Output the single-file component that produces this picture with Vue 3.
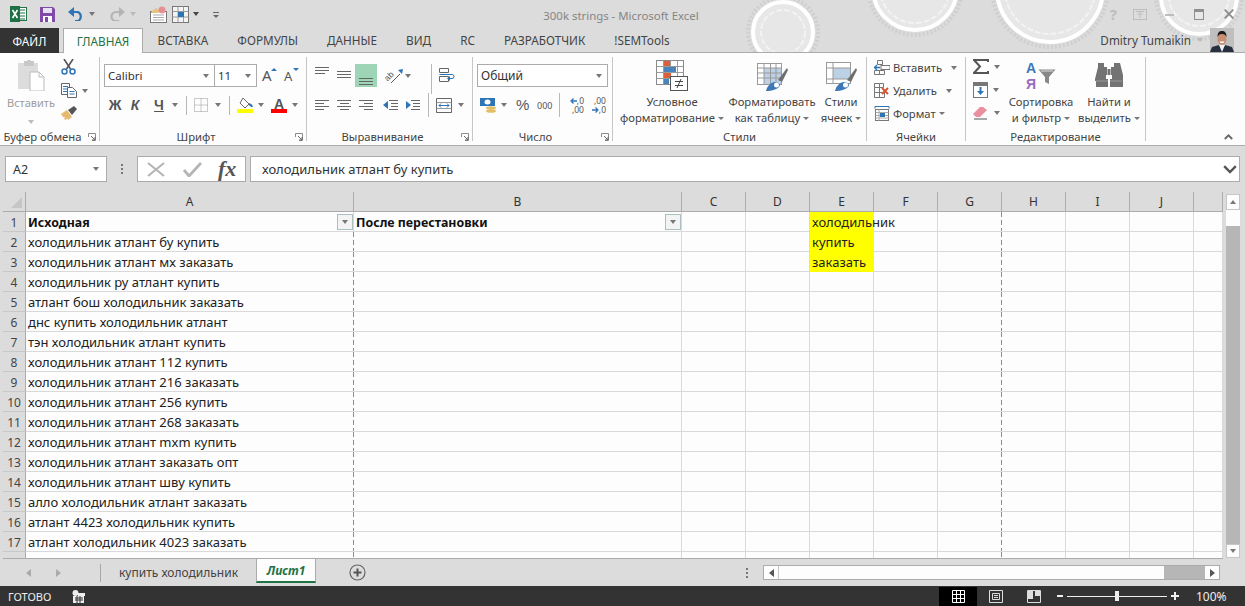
<script setup>
const rows = [
  'холодильник атлант бу купить',
  'холодильник атлант мх заказать',
  'холодильник ру атлант купить',
  'атлант бош холодильник заказать',
  'днс купить холодильник атлант',
  'тэн холодильник атлант купить',
  'холодильник атлант 112 купить',
  'холодильник атлант 216 заказать',
  'холодильник атлант 256 купить',
  'холодильник атлант 268 заказать',
  'холодильник атлант mxm купить',
  'холодильник атлант заказать опт',
  'холодильник атлант шву купить',
  'алло холодильник атлант заказать',
  'атлант 4423 холодильник купить',
  'атлант холодильник 4023 заказать',
  '',
  ''
]
const cols = ['A', 'B', 'C', 'D', 'E', 'F', 'G', 'H', 'I', 'J', '']
const tabs = ['ВСТАВКА', 'ФОРМУЛЫ', 'ДАННЫЕ', 'ВИД', 'RC', 'РАЗРАБОТЧИК', '!SEMTools']
const eCol = { 1: 'холодильник', 2: 'купить', 3: 'заказать' }
</script>

<template>
  <div class="app">
    <svg class="rings" width="1245" height="52" viewBox="0 0 1245 52">
      <g fill="#e7e7e7" stroke="#fff" stroke-width="4">
        <g>
          <circle cx="783" cy="32" r="35" fill="none" stroke="#cfcfcf" stroke-width="4" stroke-dasharray="2 2"/>
          <circle cx="783" cy="32" r="30"/>
          <circle cx="783" cy="32" r="22" fill="none" stroke="#f3f3f3" stroke-width="2" stroke-dasharray="6 2"/>
        </g>
        <g>
          <circle cx="915" cy="-12" r="47" fill="none" stroke="#cfcfcf" stroke-width="4" stroke-dasharray="2 2"/>
          <circle cx="915" cy="-12" r="42"/>
          <circle cx="915" cy="-12" r="35" fill="none" stroke="#f3f3f3" stroke-width="2" stroke-dasharray="6 2"/>
        </g>
        <g>
          <circle cx="1050" cy="-11" r="58" fill="none" stroke="#cfcfcf" stroke-width="4" stroke-dasharray="2 2"/>
          <circle cx="1050" cy="-11" r="53"/>
          <circle cx="1050" cy="-11" r="45" fill="none" stroke="#f3f3f3" stroke-width="2" stroke-dasharray="6 2"/>
        </g>
        <g>
          <circle cx="1199" cy="-4" r="43" fill="none" stroke="#cfcfcf" stroke-width="4" stroke-dasharray="2 2"/>
          <circle cx="1199" cy="-4" r="38"/>
          <circle cx="1199" cy="-4" r="30" fill="none" stroke="#f3f3f3" stroke-width="2" stroke-dasharray="6 2"/>
        </g>
      </g>
    </svg>

    <header class="titlebar">
      <div class="qat">
        <svg class="ml10" width="17" height="16" viewBox="0 0 17 16"><rect x="6.500" y="1.500" width="10" height="13" fill="#fff" stroke="#217346"/><path d="M10 4h5M10 7h5M10 10h5M10 13h5" stroke="#217346"/><rect x="0" y="0" width="10" height="16" fill="#1e7145"/><path d="M2.500 4l5 8M7.500 4l-5 8" stroke="#fff" stroke-width="1.600"/></svg>
        <svg class="ml13" width="15" height="15" viewBox="0 0 15 15"><path d="M0 0h13l2 2v13H0z" fill="#7f4aa8"/><rect x="3" y="1" width="9" height="5" fill="#e9e0f0"/><rect x="3" y="9" width="9" height="6" fill="#fff"/><rect x="5" y="10" width="3" height="5" fill="#7f4aa8"/></svg>
        <svg class="ml13" width="17" height="14" viewBox="0 0 17 14"><path d="M2 5h8a5 5 0 0 1 0 9H7" fill="none" stroke="#2f75b5" stroke-width="2.200"/><path d="M6 0v10L0 5z" fill="#2f75b5"/></svg>
        <i class="caret ml4"></i>
        <svg class="ml15" width="15" height="14" viewBox="0 0 15 14"><path d="M13 5H6a4.500 4.500 0 0 0 0 9h3" fill="none" stroke="#b4b4b4" stroke-width="2.200"/><path d="M9 0v10l6-5z" fill="#b4b4b4"/></svg>
        <i class="caret pale ml5"></i>
        <svg class="ml14" width="17" height="17" viewBox="0 0 17 17"><rect x=".5" y="5.500" width="16" height="11" fill="#fff" stroke="#777"/><path d="M3 9h11M3 11.500h11M3 14h11" stroke="#aaa"/><path d="M1 6l5-4 4 3-2 2H1z" fill="#e7c27d"/><circle cx="12" cy="4" r="3.500" fill="#e58f97"/></svg>
        <svg class="ml5" width="17" height="17" viewBox="0 0 17 17"><rect x=".5" y=".5" width="16" height="16" fill="#f4f4f4" stroke="#777"/><path d="M.5 5.500h16M.5 11h16M6 .5v16M11.500.5v16" stroke="#9a9a9a"/><rect x="6" y="6" width="6" height="5" fill="#2f75b5"/></svg>
        <i class="caret dark ml4"></i>
        <div class="qatmore ml14"><b></b><i class="caret tiny"></i></div>
      </div>
      <div class="title">300k strings - Microsoft Excel</div>
      <div class="winbtns">
        <span class="help">?</span>
        <svg class="ml16" width="14" height="11" viewBox="0 0 14 11"><rect x=".5" y=".5" width="13" height="10" fill="none" stroke="#bdbdbd"/><path d="M7 9V4M4.500 6L7 3.500 9.500 6M3 2.500h8" stroke="#bdbdbd" fill="none"/></svg>
        <svg class="ml18" width="9" height="3" viewBox="0 0 9 3"><rect width="9" height="2" y="1" fill="#bdbdbd"/></svg>
        <svg class="ml20" width="10" height="11" viewBox="0 0 10 11"><rect x=".5" y=".5" width="9" height="10" fill="none" stroke="#8f8f8f"/><rect width="10" height="2" y="1" fill="#8f8f8f"/></svg>
        <svg class="ml20" width="10" height="10" viewBox="0 0 10 10"><path d="M.7.7l8.600 8.600M9.300.7L.7 9.300" stroke="#8a8a8a" stroke-width="1.800"/></svg>
      </div>
    </header>

    <nav class="tabs">
      <div class="file">ФАЙЛ</div>
      <div class="tab active">ГЛАВНАЯ</div>
      <div v-for="t in tabs" :key="t" class="tab">{{ t }}</div>
      <div class="user">
        <span>Dmitry Tumaikin</span>
        <i class="caret pale ml6"></i>
        <svg class="avatar" width="24" height="24" viewBox="0 0 24 24"><rect width="24" height="24" fill="#bfbfbf"/><path d="M0 24l2-5 7-2 3 3 3-3 7 2 2 5z" fill="#26303e"/><path d="M9 17l3 7 3-7z" fill="#f2f2f2"/><ellipse cx="12" cy="11" rx="4.500" ry="6" fill="#c88f72"/><path d="M7.500 9c0-5 2-6 4.500-6s4.500 1 4.500 6c-1-2-2-3-4.500-3S8.500 7 7.500 9z" fill="#1d1a1a"/><path d="M9.500 13.500h5l-1 1.500h-3z" fill="#fff"/></svg>
      </div>
    </nav>

    <section class="ribbon">
      <div class="grp g1">
        <div class="body clip">
          <div class="pastecol">
            <svg width="28" height="31" viewBox="0 0 28 31"><path d="M1 3h20v26H1z" fill="#dcdcdc"/><path d="M7 3V1h3l1-1h2l1 1h3v5H7z" fill="#c8c8c8"/><path d="M13 12h9l5 5v14H13z" fill="#fff" stroke="#bcbcbc"/><path d="M22 12v5h5" fill="none" stroke="#bcbcbc"/></svg>
            <span class="pastetxt">Вставить</span>
            <i class="caret pale mt9"></i>
          </div>
          <div class="smallcol">
            <svg width="15" height="16" viewBox="0 0 15 16"><path d="M3 0l6.500 10M12 0L5.500 10" stroke="#555" stroke-width="1.600"/><circle cx="3.500" cy="12.500" r="2.500" fill="none" stroke="#2f75b5" stroke-width="1.500"/><circle cx="11.500" cy="12.500" r="2.500" fill="none" stroke="#2f75b5" stroke-width="1.500"/></svg>
            <div class="rowc">
              <svg width="16" height="15" viewBox="0 0 16 15"><path d="M.5.5h8v11h-8z" fill="#fff" stroke="#666"/><path d="M2 3.500h5M2 6h5M2 8.500h5" stroke="#2f75b5"/><path d="M6.500 4.500h5l4 4v6h-9z" fill="#fff" stroke="#666"/><path d="M8.500 8.500h5M8.500 11h5" stroke="#2f75b5"/></svg>
              <i class="caret ml5"></i>
            </div>
            <svg width="17" height="15" viewBox="0 0 17 15"><path d="M0 8l6-4 5 7-4 3-1-2-1 2-2-1 1-2-2 0z" fill="#e7b96f"/><path d="M7 4l6-4 3 3-5 6z" fill="#555"/></svg>
          </div>
        </div>
        <div class="glabel"><i></i><span>Буфер обмена</span><i></i><svg class="launch" width="8" height="8" viewBox="0 0 8 8"><path d="M.5 4V.5H7.500V7.500H4" fill="none" stroke="#8c8c8c"/><path d="M3 3l4 4M7 4v3H4" stroke="#666" fill="none"/></svg></div>
      </div>
      <i class="gsep"></i>

      <div class="grp g2">
        <div class="body col">
          <div class="r1">
            <div class="combo font"><span>Calibri</span><i class="caret"></i></div>
            <div class="combo size"><span>11</span><i class="caret"></i></div>
            <span class="growA ml5">A<i class="tri up"></i></span>
            <span class="shrinkA ml7">A<i class="tri down"></i></span>
          </div>
          <div class="r2">
            <b class="fx w20 ml5">Ж</b>
            <b class="fx w20 it">К</b>
            <b class="fx w20 ml4 un">Ч</b>
            <i class="caret ml3"></i>
            <i class="vs ml8"></i>
            <svg class="ml7" width="14" height="14" viewBox="0 0 14 14"><path d="M.5.5h13v13H.5zM7 .5v13M.5 7h13" fill="none" stroke="#999" stroke-dasharray="1 1"/></svg>
            <i class="caret ml7"></i>
            <i class="vs ml8"></i>
            <svg class="ml7" width="16" height="15" viewBox="0 0 16 15"><path d="M6 0l6 6-4 4-5-5z" fill="#fff" stroke="#666"/><path d="M12 6c2 1 3 2 3 3" stroke="#2f75b5" stroke-width="2" fill="none"/><rect y="11" width="16" height="4" fill="#ffff00"/></svg>
            <i class="caret ml5"></i>
            <span class="fcolor ml7">A</span>
            <i class="caret ml5"></i>
          </div>
        </div>
        <div class="glabel"><i></i><span>Шрифт</span><i></i><svg class="launch" width="8" height="8" viewBox="0 0 8 8"><path d="M.5 4V.5H7.500V7.500H4" fill="none" stroke="#8c8c8c"/><path d="M3 3l4 4M7 4v3H4" stroke="#666" fill="none"/></svg></div>
      </div>
      <i class="gsep"></i>

      <div class="grp g3">
        <div class="body col">
          <div class="r1">
            <svg class="ml8" width="14" height="23" viewBox="0 0 14 23"><path d="M0 3.500h14M0 6.500h14M0 9.500h10" stroke="#666" fill="none"/></svg>
            <svg class="ml8" width="14" height="23" viewBox="0 0 14 23"><path d="M0 7.500h14M0 10.500h14M0 13.500h14" stroke="#666"/></svg>
            <span class="alignOn ml4"><svg width="14" height="23" viewBox="0 0 14 23"><path d="M0 14.500h14M0 17.500h14M0 20.500h14" stroke="#666"/></svg></span>
            <svg class="ml6 vis" width="20" height="18" viewBox="0 0 20 18"><text x="1" y="12" font-size="8.500" fill="#555" font-family="Liberation Sans" transform="rotate(-45 6 9)">ab</text><path d="M8 16L17 7" stroke="#555"/><path d="M15 3l5-1-1 5z" fill="#2f75b5"/></svg>
            <i class="caret ml2"></i>
            <i class="vs top ml20"></i>
            <svg class="ml7" width="16" height="15" viewBox="0 0 16 15"><path d="M.5.5h9v4h-9zM.5 8.500h9v5h-9z" fill="none" stroke="#666"/><path d="M.5 6.500H13a2 2 0 0 1 0 4h-2" stroke="#2f75b5" fill="none"/><path d="M11 8v5l-3-2.500z" fill="#2f75b5"/></svg>
          </div>
          <div class="r2">
            <svg class="ml8" width="14" height="11" viewBox="0 0 14 11"><path d="M0 .5h14M0 3.500h9M0 6.500h14M0 9.500h9" stroke="#666"/></svg>
            <svg class="ml8" width="14" height="11" viewBox="0 0 14 11"><path d="M0 .5h14M3 3.500h9M0 6.500h14M3 9.500h9" stroke="#666"/></svg>
            <svg class="ml8" width="14" height="11" viewBox="0 0 14 11"><path d="M0 .5h14M5 3.500h9M0 6.500h14M5 9.500h9" stroke="#666"/></svg>
            <svg class="ml10" width="15" height="11" viewBox="0 0 15 11"><path d="M6 .5h9M8 3.500h7M8 6.500h7M6 9.500h9" stroke="#666"/><path d="M0 5l5-4v8z" fill="#2f75b5"/></svg>
            <svg class="ml7" width="15" height="11" viewBox="0 0 15 11"><path d="M6 .5h9M8 3.500h7M8 6.500h7M6 9.500h9" stroke="#666"/><path d="M6 5L1 1v8z" fill="#2f75b5"/></svg>
            <i class="vs tall ml8"></i>
            <svg class="ml7" width="16" height="15" viewBox="0 0 16 15"><path d="M.5.500h15v14H.5z" fill="none" stroke="#666"/><path d="M.5 4.500h15M.5 10.500h15" stroke="#999"/><path d="M3 7.500h10M3 7.500l2-2M3 7.500l2 2M13 7.500l-2-2M13 7.500l-2 2" stroke="#2f75b5" fill="none"/></svg>
            <i class="caret ml6"></i>
          </div>
        </div>
        <div class="glabel"><i></i><span>Выравнивание</span><i></i><svg class="launch" width="8" height="8" viewBox="0 0 8 8"><path d="M.5 4V.5H7.500V7.500H4" fill="none" stroke="#8c8c8c"/><path d="M3 3l4 4M7 4v3H4" stroke="#666" fill="none"/></svg></div>
      </div>
      <i class="gsep"></i>

      <div class="grp g4">
        <div class="body col">
          <div class="r1"><div class="combo numfmt"><span>Общий</span><i class="caret"></i></div></div>
          <div class="r2">
            <svg class="ml7" width="17" height="17" viewBox="0 0 17 17"><rect y="1" width="15" height="8" fill="#2f75b5"/><ellipse cx="7.500" cy="5" rx="3" ry="2.500" fill="#fff"/><ellipse cx="11" cy="11" rx="5" ry="1.800" fill="#e5bf65"/><ellipse cx="11" cy="14" rx="5" ry="1.800" fill="#e5bf65"/></svg>
            <i class="caret ml4"></i>
            <span class="pct ml9">%</span>
            <span class="thou ml8">000</span>
            <i class="vs tall ml7"></i>
            <span class="dec ml7">
              <span class="dl"><svg width="7" height="6" viewBox="0 0 7 6"><path d="M7 3H2M3.500.5L1 3l2.500 2.500" fill="none" stroke="#2f75b5" stroke-width="1.300"/></svg><b>,0</b></span>
              <span class="dl"><b>,00</b></span>
            </span>
            <span class="dec ml5">
              <span class="dl"><b>,00</b></span>
              <span class="dl"><svg width="7" height="6" viewBox="0 0 7 6"><path d="M0 3h5M3.500.5L6 3 3.500 5.500" fill="none" stroke="#2f75b5" stroke-width="1.300"/></svg><b>,0</b></span>
            </span>
          </div>
        </div>
        <div class="glabel"><i></i><span>Число</span><i></i><svg class="launch" width="8" height="8" viewBox="0 0 8 8"><path d="M.5 4V.5H7.500V7.500H4" fill="none" stroke="#8c8c8c"/><path d="M3 3l4 4M7 4v3H4" stroke="#666" fill="none"/></svg></div>
      </div>
      <i class="gsep"></i>

      <div class="grp g5">
        <div class="body">
          <div class="big bcond">
            <svg width="32" height="32" viewBox="0 0 32 32"><rect x=".5" y=".5" width="27" height="24" fill="#fff" stroke="#8a8a8a"/><path d="M.5 6.500h27M.5 12.500h27M.5 18.500h27M7.500.5v24M14.500.5v24M21.500.5v24" stroke="#9a9a9a"/><rect x="8" y="1" width="6" height="5" fill="#d9603b"/><rect x="8" y="7" width="12" height="5" fill="#4a82bc"/><rect x="8" y="13" width="7" height="5" fill="#d9603b"/><rect x="8" y="19" width="5" height="5" fill="#4a82bc"/><rect x="14.500" y="16.500" width="17" height="14" fill="#fff" stroke="#555"/><path d="M19 21.500h8M19 25.500h8M25 19l-4 9" stroke="#444"/></svg>
            <span>Условное</span>
            <span class="wc">форматирование<i class="caret small"></i></span>
          </div>
          <div class="big btbl">
            <svg width="32" height="32" viewBox="0 0 32 32"><rect x="1.500" y="3.500" width="24" height="21" fill="#fff" stroke="#9a9a9a"/><rect x="8" y="8" width="17" height="16" fill="#bcd0e6"/><path d="M1.500 8h24M1.500 13h24M1.500 18h24M8 3.500v21M14.500 3.500v21M20 3.500v21" stroke="#9a9a9a"/><path d="M22 20l9-12 1 2-6 12z" fill="#6f6f6f"/><path d="M10 31c1-5 5-9 9-9 3 0 5 2 5 3-1 4-8 6-14 6z" fill="#3f78b8"/><circle cx="20.500" cy="25" r="2.500" fill="#fff"/></svg>
            <span>Форматировать</span>
            <span class="wc">как таблицу<i class="caret small"></i></span>
          </div>
          <div class="big bcell">
            <svg width="32" height="32" viewBox="0 0 32 32"><rect x="1.500" y="2.500" width="24" height="21" fill="#fff" stroke="#9a9a9a"/><rect x="8" y="8" width="17" height="11" fill="#bcd0e6"/><path d="M1.500 8h24M1.500 19h24M8 2.500v21" stroke="#9a9a9a"/><path d="M22 20l9-12 1 2-6 12z" fill="#6f6f6f"/><path d="M10 31c1-5 5-9 9-9 3 0 5 2 5 3-1 4-8 6-14 6z" fill="#3f78b8"/><circle cx="20.500" cy="25" r="2.500" fill="#fff"/></svg>
            <span>Стили</span>
            <span class="wc">ячеек<i class="caret small"></i></span>
          </div>
        </div>
        <div class="glabel nol"><i></i><span>Стили</span><i></i></div>
      </div>
      <i class="gsep"></i>

      <div class="grp g6">
        <div class="body col cells">
          <div class="cr">
            <svg width="16" height="15" viewBox="0 0 16 15"><path d="M3.500.5h5v4h-5zM.5 10.500h5v4h-5zM5.500 10.500h5v4h-5z" fill="none" stroke="#777"/><rect x="7" y="5.500" width="9" height="4" fill="none" stroke="#777"/><path d="M6 7.500H1M3 5L.5 7.500 3 10" fill="none" stroke="#2f75b5" stroke-width="1.300"/></svg>
            <span class="ct">Вставить</span><i class="caret m12"></i>
          </div>
          <div class="cr">
            <svg width="16" height="15" viewBox="0 0 16 15"><path d="M.5.5h5v4h-5zM5.500.5h4v4h-4zM.5 4.500h5v5h-5zM.5 9.500h5v5h-5zM5.500 9.500h5v5h-5z" fill="none" stroke="#777"/><path d="M8 5l6 6M14 5l-6 6" stroke="#d5502c" stroke-width="1.800"/></svg>
            <span class="ct">Удалить</span><i class="caret m12"></i>
          </div>
          <div class="cr">
            <svg width="16" height="15" viewBox="0 0 16 15"><path d="M1 .5h14M1 .5v2M15 .5v2" stroke="#2f75b5"/><rect x="1.500" y="3.500" width="13" height="11" fill="#fff" stroke="#777"/><path d="M1.500 6.500h13M1.500 9.500h13M1.500 12h13M5 3.500v11" stroke="#aaa"/><rect x="6" y="7" width="5" height="4" fill="#2f75b5"/></svg>
            <span class="ct">Формат</span><i class="caret small ml5"></i>
          </div>
        </div>
        <div class="glabel nol"><i></i><span>Ячейки</span><i></i></div>
      </div>
      <i class="gsep"></i>

      <div class="grp g7">
        <div class="body">
          <div class="edit">
            <div class="cr">
              <svg width="16" height="15" viewBox="0 0 16 15"><path d="M15 3V1H1l6 6.500L1 14h14v-2" fill="none" stroke="#555" stroke-width="2"/></svg>
              <i class="caret ml5"></i>
            </div>
            <div class="cr">
              <svg width="15" height="16" viewBox="0 0 15 16"><rect x=".5" y=".5" width="14" height="15" fill="#fff" stroke="#777"/><rect x="1" y="1" width="13" height="3" fill="#777"/><path d="M7.500 5v6" stroke="#2f75b5" stroke-width="2"/><path d="M4 9h7l-3.500 4z" fill="#2f75b5"/></svg>
              <i class="caret ml5"></i>
            </div>
            <div class="cr">
              <svg width="16" height="14" viewBox="0 0 16 14"><path d="M0 8l7-7h3l4 3-7 7H3z" fill="#ea8f9f"/><path d="M1 13h13" stroke="#555"/></svg>
              <i class="caret ml5"></i>
            </div>
          </div>
          <div class="big bsort">
            <div class="sorti"><div class="ay"><span class="sa">А</span><span class="sy">Я</span></div><svg width="18" height="16" viewBox="0 0 18 16"><path d="M.5.500h17L11 8v7l-4-2V8z" fill="#888"/><path d="M3 2h12" stroke="#ddd"/></svg></div>
            <span>Сортировка</span>
            <span class="wc">и фильтр<i class="caret small"></i></span>
          </div>
          <div class="big bfind">
            <svg width="32" height="32" viewBox="0 0 32 32"><path d="M5 3h6v4h3v8h-1v4H15v8H3v-6H2v-2l3-12zM21 3h6l3 12 0 8v4H17V19h2v-4h-1V7h3z" fill="#737373"/><path d="M14.500 9h3v6h-3z" fill="#737373"/><path d="M3 21h12M17 21h12" stroke="#999"/></svg>
            <span>Найти и</span>
            <span class="wc">выделить<i class="caret small"></i></span>
          </div>
        </div>
        <div class="glabel nol"><i></i><span>Редактирование</span><i></i></div>
      </div>
      <i class="gsep"></i>
      <div class="collapse"><svg width="9" height="6" viewBox="0 0 9 6"><path d="M.8 5l3.700-3.700L8.200 5" fill="none" stroke="#666" stroke-width="1.800"/></svg></div>
    </section>

    <section class="formula">
      <div class="namebox"><span>A2</span><i class="caret"></i></div>
      <div class="vdots"><b></b><b></b><b></b></div>
      <div class="fxbox">
        <svg width="18" height="15" viewBox="0 0 18 15"><path d="M1 1l16 13M17 1L1 14" stroke="#b5b5b5" stroke-width="2.200"/></svg>
        <svg width="19" height="15" viewBox="0 0 19 15"><path d="M1 8l5 6L18 1" fill="none" stroke="#b5b5b5" stroke-width="2.800"/></svg>
        <span class="fxt">fx</span>
      </div>
      <div class="input"><span>холодильник атлант бу купить</span><svg width="14" height="9" viewBox="0 0 14 9"><path d="M1.200 1.200L7 7l5.800-5.800" fill="none" stroke="#555" stroke-width="2.400"/></svg></div>
    </section>

    <section class="sheet">
      <div class="gridwrap">
        <div class="grid">
          <div class="corner"><svg width="11" height="11" viewBox="0 0 11 11"><path d="M11 0v11H0z" fill="#c6c6c6"/></svg></div>
          <div v-for="c in cols" :key="'h' + c" class="chead">{{ c }}</div>
          <template v-for="(r, i) in rows" :key="i">
            <div class="rhead">{{ i === 17 ? '' : i + 1 }}</div>
            <div class="c" :class="{ dashr: i > 0 }">
              <template v-if="i === 0"><b>Исходная</b><i class="filter"><i></i></i></template>
              <span v-else>{{ rows[i - 1] }}</span>
            </div>
            <div class="c">
              <template v-if="i === 0"><b>После перестановки</b><i class="filter"><i></i></i></template>
            </div>
            <div class="c"></div>
            <div class="c"></div>
            <div class="c" :class="{ yellow: eCol[i + 1] }">{{ eCol[i + 1] }}</div>
            <div class="c"></div>
            <div class="c dashr"></div>
            <div class="c"></div>
            <div class="c"></div>
            <div class="c"></div>
            <div class="c"></div>
          </template>
        </div>
      </div>
      <div class="vscroll">
        <div class="sbtn"><i class="caret up"></i></div>
        <div class="vthumb"></div>
        <div class="vtrack"></div>
        <div class="sbtn"><i class="caret"></i></div>
      </div>
    </section>

    <section class="sheetbar">
      <i class="arrow l ml26"></i>
      <i class="arrow r ml25"></i>
      <i class="vs sh ml39"></i>
      <div class="stab">купить холодильник</div>
      <div class="stab on">Лист1</div>
      <svg class="ml33" width="17" height="17" viewBox="0 0 17 17"><circle cx="8.500" cy="8.500" r="7.500" fill="none" stroke="#666" stroke-width="1.200"/><path d="M4.500 8.500h8M8.500 4.500v8" stroke="#555" stroke-width="2"/></svg>
      <div class="vdots sm"><b></b><b></b><b></b></div>
      <div class="hscroll">
        <div class="sbtn h"><i class="arrow l tiny"></i></div>
        <div class="hthumb"></div>
        <div class="htrack"></div>
        <div class="sbtn h"><i class="arrow r tiny"></i></div>
      </div>
    </section>

    <footer class="status">
      <span class="ready">ГОТОВО</span>
      <svg class="ml20" width="13" height="13" viewBox="0 0 13 13"><circle cx="3.500" cy="3" r="3" fill="#eee"/><path d="M1 6h11v7H1z" fill="#eee"/><path d="M3 8h8M3 10h8M5 6v7M8 6v7" stroke="#333"/><path d="M6 3h7v3H6z" fill="#eee"/></svg>
      <div class="views">
        <div class="vw on"><svg width="13" height="13" viewBox="0 0 13 13"><path d="M.5.500h12v12H.5zM4.500.5v12M8.500.5v12M.5 4.500h12M.5 8.500h12" fill="none" stroke="#fff"/></svg></div>
        <div class="vw"><svg width="14" height="13" viewBox="0 0 14 13"><path d="M.5.500h13v12H.5z" fill="none" stroke="#ddd"/><path d="M3.500 3.500h7v6h-7zM5 5.500h4M5 7.500h4" fill="none" stroke="#ddd"/></svg></div>
        <div class="vw"><svg width="14" height="13" viewBox="0 0 14 13"><path d="M.5.500h13v12H.5z" fill="none" stroke="#ddd"/><path d="M1 1h5v8H1zM8 1h5v5H8z" fill="#ddd"/></svg></div>
      </div>
      <div class="zoom">
        <i class="minus"></i>
        <div class="slider"><i></i></div>
        <i class="plus"></i>
      </div>
      <span class="pctz">100%</span>
    </footer>
  </div>
</template>

<style>
html, body { margin: 0; background: #dcdcdc; }
</style>

<style scoped>
.app { position: relative; width: 1245px; height: 606px; overflow: hidden; display: flex; flex-direction: column; background: #dcdcdc; font-family: "Noto Sans", "Open Sans", sans-serif; font-size: 11.25px; color: #444; }
svg { display: block; flex: none; }
svg.vis { overflow: visible; }
i { display: block; font-style: normal; }
.rings { position: absolute; left: 0; top: 0; }
.ml2 { margin-left: 2px; } .ml3 { margin-left: 3px; } .ml4 { margin-left: 4px; } .ml5 { margin-left: 5px; } .ml6 { margin-left: 6px; } .ml7 { margin-left: 7px; } .ml8 { margin-left: 8px; } .ml9 { margin-left: 9px; } .ml10 { margin-left: 10px; } .ml13 { margin-left: 13px; } .ml14 { margin-left: 14px; } .ml15 { margin-left: 15px; } .ml16 { margin-left: 16px; } .ml18 { margin-left: 18px; } .ml20 { margin-left: 20px; } .ml25 { margin-left: 25px; } .ml26 { margin-left: 26px; } .ml33 { margin-left: 33px; } .ml39 { margin-left: 39px; }
.mt9 { margin-top: 9px; }
.caret { width: 0; height: 0; flex: none; border-left: 3.5px solid transparent; border-right: 3.5px solid transparent; border-top: 4px solid #777; }
.caret.pale { border-top-color: #bbb; }
.caret.dark { border-top-color: #444; }
.caret.small { display: inline-block; border-left-width: 3px; border-right-width: 3px; border-top-width: 3px; margin-left: 3px; vertical-align: middle; }
.caret.tiny { border-left-width: 3px; border-right-width: 3px; border-top-width: 3px; border-top-color: #666; }
.caret.up { border-top: 0; border-bottom: 4px solid #777; }

.titlebar { position: relative; height: 28px; display: grid; grid-template-columns: 1fr auto 1fr; align-items: center; }
.qat, .winbtns { display: flex; align-items: center; }
.winbtns { justify-content: flex-end; padding-right: 11px; }
.title { font-size: 11.4px; color: #858585; padding: 2px 3px 0 0; }
.help { font-size: 15px; font-weight: 700; color: #bdbdbd; line-height: 15px; }
.qatmore b { display: block; width: 6px; height: 1px; background: #666; margin: 0 0 2px; }
.qatmore { padding-top: 2px; }

.tabs { position: relative; height: 24px; display: flex; align-items: stretch; border-bottom: 1px solid #ababab; font-size: 11.75px; }
.file { width: 59px; background: #333; color: #fff; display: flex; align-items: center; justify-content: center; margin-bottom: -1px; }
.tab { padding: 0 14.5px; display: flex; align-items: center; color: #444; }
.tab.active { width: 80px; box-sizing: border-box; padding: 0; justify-content: center; margin: 0 0 -1px 4px; background: #fdfdfd; color: #217346; border: 1px solid #ababab; border-bottom: 0; }
.user { margin-left: auto; display: flex; align-items: center; padding-right: 11px; font-size: 11.7px; color: #444; }
.avatar { margin-left: 7px; align-self: flex-end; }

.ribbon { height: 92px; display: flex; background: #fdfdfd; border-bottom: 1px solid #ababab; }
.grp { display: flex; flex-direction: column; }
.g1 { width: 99px; } .g2 { width: 206px; } .g3 { width: 165px; } .g4 { width: 139px; } .g5 { width: 253px; } .g6 { width: 98px; } .g7 { width: 179px; }
.gsep { width: 1px; height: 84px; margin-top: 4px; background: #c6c6c6; flex: none; }
.body { height: 76px; display: flex; }
.body.col { flex-direction: column; }
.glabel { height: 16px; display: grid; grid-template-columns: 1fr auto 1fr 14px; align-items: center; line-height: 16px; color: #444; white-space: nowrap; }
.glabel.nol { grid-template-columns: 1fr auto 1fr; }
.launch { justify-self: start; margin-left: 3px; }

.pastecol { width: 60px; display: flex; flex-direction: column; align-items: center; padding-top: 7px; margin-left: 1px; }
.pastetxt { color: #9c9c9c; font-size: 11px; line-height: 16px; margin-top: 4px; }
.smallcol { display: flex; flex-direction: column; gap: 8px; padding-top: 6px; }
.rowc, .cr { display: flex; align-items: center; }

.r1 { height: 23px; margin-top: 11px; display: flex; align-items: center; }
.r2 { height: 24px; margin-top: 6px; display: flex; align-items: center; }
.combo { height: 23px; box-sizing: border-box; border: 1px solid #ababab; background: #fff; display: flex; align-items: center; justify-content: space-between; padding: 0 5px 0 3px; color: #333; font-size: 11.5px; }
.combo.font { width: 111px; margin-left: 4px; }
.combo.size { width: 43px; margin-left: -1px; }
.combo.numfmt { width: 131px; margin-left: 4px; font-size: 12px; }
.growA, .shrinkA { position: relative; display: block; font-weight: 400; color: #555; line-height: 1; width: 15px; }
.growA { font-size: 15px; } .shrinkA { font-size: 13px; padding-top: 2px; }
.tri { position: absolute; right: 0; top: 0; width: 0; height: 0; border-left: 3px solid transparent; border-right: 3px solid transparent; }
.tri.up { border-bottom: 3px solid #2f75b5; }
.tri.down { border-top: 3px solid #2f75b5; }
.fx { text-align: center; font-size: 14px; color: #555; font-family: "Liberation Sans", sans-serif; }
.w20 { width: 20px; }
.it { font-style: italic; }
.un { text-decoration: underline; }
.vs { width: 1px; height: 19px; background: #b8b8b8; flex: none; }
.vs.tall { height: 24px; }
.vs.top { height: 30px; align-self: flex-start; margin-top: 0; }
.fcolor { width: 16px; text-align: center; font-size: 14px; line-height: 13px; height: 15px; box-sizing: border-box; color: #555; border-bottom: 4px solid #ff0000; font-family: "Liberation Sans", sans-serif; font-weight: 700; }
.alignOn { width: 22px; height: 23px; background: #9fd5b7; display: flex; justify-content: center; }
.pct { width: 13px; font-size: 15px; line-height: 16px; color: #555; font-family: "Liberation Sans", sans-serif; text-align: center; }
.thou { width: 15px; font-size: 9px; color: #555; text-align: center; }
.dec { width: 17px; display: flex; flex-direction: column; align-items: flex-end; font-size: 8.5px; line-height: 9px; color: #555; }
.dec b { font-weight: 400; }
.dl { display: flex; align-items: center; height: 9px; }

.big { display: flex; flex-direction: column; align-items: center; padding-top: 7px; line-height: 16px; color: #444; white-space: nowrap; }
.big svg { margin-bottom: 2px; }
.big .wc { display: block; }
.bcond { width: 110px; margin-left: 4px; }
.btbl { width: 90px; margin-left: 0; }
.bcell { width: 40px; margin-left: 4px; }
.cells { padding-top: 3px; padding-left: 7px; box-sizing: border-box; }
.cr { height: 23px; }
.ct { margin-left: 3px; color: #444; }
.caret.m12 { margin-left: 9px; }
.edit { padding-top: 2px; padding-left: 7px; width: 34px; }
.bsort { width: 68px; margin-left: 0; }
.bfind { width: 62px; margin-left: 3px; }
.sorti { height: 32px; margin-bottom: 2px; display: flex; align-items: flex-start; box-sizing: border-box; }
.sorti svg { margin: 9px 0 0 2px; }
.ay { display: flex; flex-direction: column; font: 700 14px/16px "Liberation Sans", sans-serif; }
.sa { color: #3f78b8; } .sy { color: #9a6cbf; }
.collapse { flex: 1; display: flex; justify-content: flex-end; align-items: flex-end; padding: 0 12px 5px 0; }

.formula { margin-top: 10px; height: 26px; display: flex; align-items: stretch; }
.namebox { width: 102px; margin-left: 5px; box-sizing: border-box; background: #fff; border: 1px solid #ababab; display: flex; align-items: center; justify-content: space-between; padding: 0 7px; font-size: 12.5px; color: #333; }
.vdots { width: 30px; display: flex; flex-direction: column; align-items: center; justify-content: center; gap: 2px; }
.vdots b { width: 2px; height: 2px; background: #777; }
.fxbox { width: 109px; box-sizing: border-box; background: #fff; border: 1px solid #ababab; display: flex; align-items: center; gap: 18px; padding-left: 9px; }
.fxt { font: italic 700 22px/1 "Liberation Serif", serif; color: #555; margin-left: -2px; }
.input { width: 990px; margin-left: 4px; box-sizing: border-box; background: #fff; border: 1px solid #ababab; display: flex; align-items: center; justify-content: space-between; padding: 0 2px 0 11px; font-size: 13px; color: #333; }

.sheet { margin-top: 10px; height: 367px; display: flex; align-items: flex-start; }
.gridwrap { margin-left: 3px; width: 1220px; height: 367px; overflow: hidden; border-bottom: 1px solid #ababab; box-sizing: border-box; }
.grid { display: grid; grid-template-columns: 23px 328px 328px repeat(8, 64px) 29px; grid-auto-rows: 20px; font-size: 13px; color: #222; }
.corner { border-right: 1px solid #ababab; border-bottom: 1px solid #ababab; box-sizing: border-box; display: flex; align-items: flex-end; justify-content: flex-end; padding: 0 3px 3px 0; }
.chead { display: flex; align-items: center; justify-content: center; box-sizing: border-box; border-right: 1px solid #adadad; border-bottom: 1px solid #ababab; color: #333; white-space: nowrap; font-size: 12px; }
.rhead { display: flex; align-items: center; justify-content: center; box-sizing: border-box; border-right: 1px solid #ababab; border-bottom: 1px solid #c8c8c8; color: #444; font-size: 12px; padding-top: 1px; }
.c { box-sizing: border-box; background-color: #fdfdfd; border-right: 1px solid #d9d9d9; border-bottom: 1px solid #d9d9d9; display: flex; align-items: center; justify-content: space-between; padding: 1px 0 0 2px; white-space: nowrap; min-width: 0; }
.c b { color: #111; font-size: 12.4px; }
.c.yellow { position: relative; z-index: 1; background-color: #ffff00; border-right-color: #ffff00; border-bottom-color: #ffff00; }
.filter { width: 16px; height: 16px; box-sizing: border-box; border: 1px solid #a9bfc0; background: #f3f3f3; display: flex; align-items: center; justify-content: center; margin-top: -1px; }
.filter i { width: 0; height: 0; border-left: 3.5px solid transparent; border-right: 3.5px solid transparent; border-top: 4px solid #777; }
.dashr { border-right-color: transparent; background: #fdfdfd linear-gradient(#8c8c8c 5px, transparent 5px) right top / 1px 8px repeat-y; background-origin: border-box; background-clip: border-box; }

.vscroll { width: 14px; height: 364px; margin: 2px 0 0 3px; display: flex; flex-direction: column; }
.sbtn { height: 16px; background: #fdfdfd; border: 1px solid #c6c6c6; box-sizing: border-box; display: flex; align-items: center; justify-content: center; flex: none; }
.vscroll .sbtn:last-child { height: 14px; }
.vthumb { height: 16px; background: #fdfdfd; flex: none; }
.vtrack { flex: 1; background: #b6b6b6; }

.sheetbar { height: 27px; display: flex; align-items: center; }
.arrow { width: 0; height: 0; border-top: 4px solid transparent; border-bottom: 4px solid transparent; }
.arrow.l { border-right: 5px solid #aaa; }
.arrow.r { border-left: 5px solid #aaa; }
.arrow.tiny.l { border-right-color: #555; }
.arrow.tiny.r { border-left-color: #555; }
.vs.sh { height: 18px; background: #a8a8a8; }
.stab { height: 27px; display: flex; align-items: center; padding: 0 18px; color: #444; font-size: 12px; box-sizing: border-box; }
.stab.on { width: 60px; padding: 0; justify-content: center; background: #fdfdfd; border: 1px solid #ababab; border-top: 0; border-bottom: 2px solid #217346; height: 24px; align-self: flex-start; color: #217346; font-weight: 700; font-style: italic; }
.vdots.sm { width: 16px; margin-left: 373px; }
.hscroll { width: 457px; height: 15px; margin-left: 8px; border: 1px solid #ababab; box-sizing: border-box; display: flex; background: #fdfdfd; }
.sbtn.h { width: 14px; height: auto; border: 0; }
.hthumb { width: 385px; background: #fdfdfd; border-left: 1px solid #c6c6c6; }
.htrack { flex: 1; background: #b6b6b6; }

.status { height: 20px; background: #333; color: #eee; display: flex; align-items: center; font-size: 11px; }
.ready { margin-left: 8px; width: 44px; }
.views { margin-left: 854px; display: flex; align-self: flex-end; height: 19px; }
.vw { width: 38px; display: flex; align-items: center; justify-content: center; }
.vw.on { background: #000; }
.zoom { display: flex; align-items: center; margin-left: 4px; }
.minus { width: 6px; height: 2px; background: #eee; }
.slider { width: 100px; height: 1px; background: #eee; margin-left: 4px; display: flex; justify-content: center; align-items: center; }
.slider i { width: 4px; height: 10px; background: #eee; flex: none; }
.plus { width: 8px; height: 8px; margin-left: 4px; background: linear-gradient(#eee, #eee) center / 8px 2px no-repeat, linear-gradient(#eee, #eee) center / 2px 8px no-repeat; }
.pctz { margin-left: 17px; font-size: 12px; }
</style>
